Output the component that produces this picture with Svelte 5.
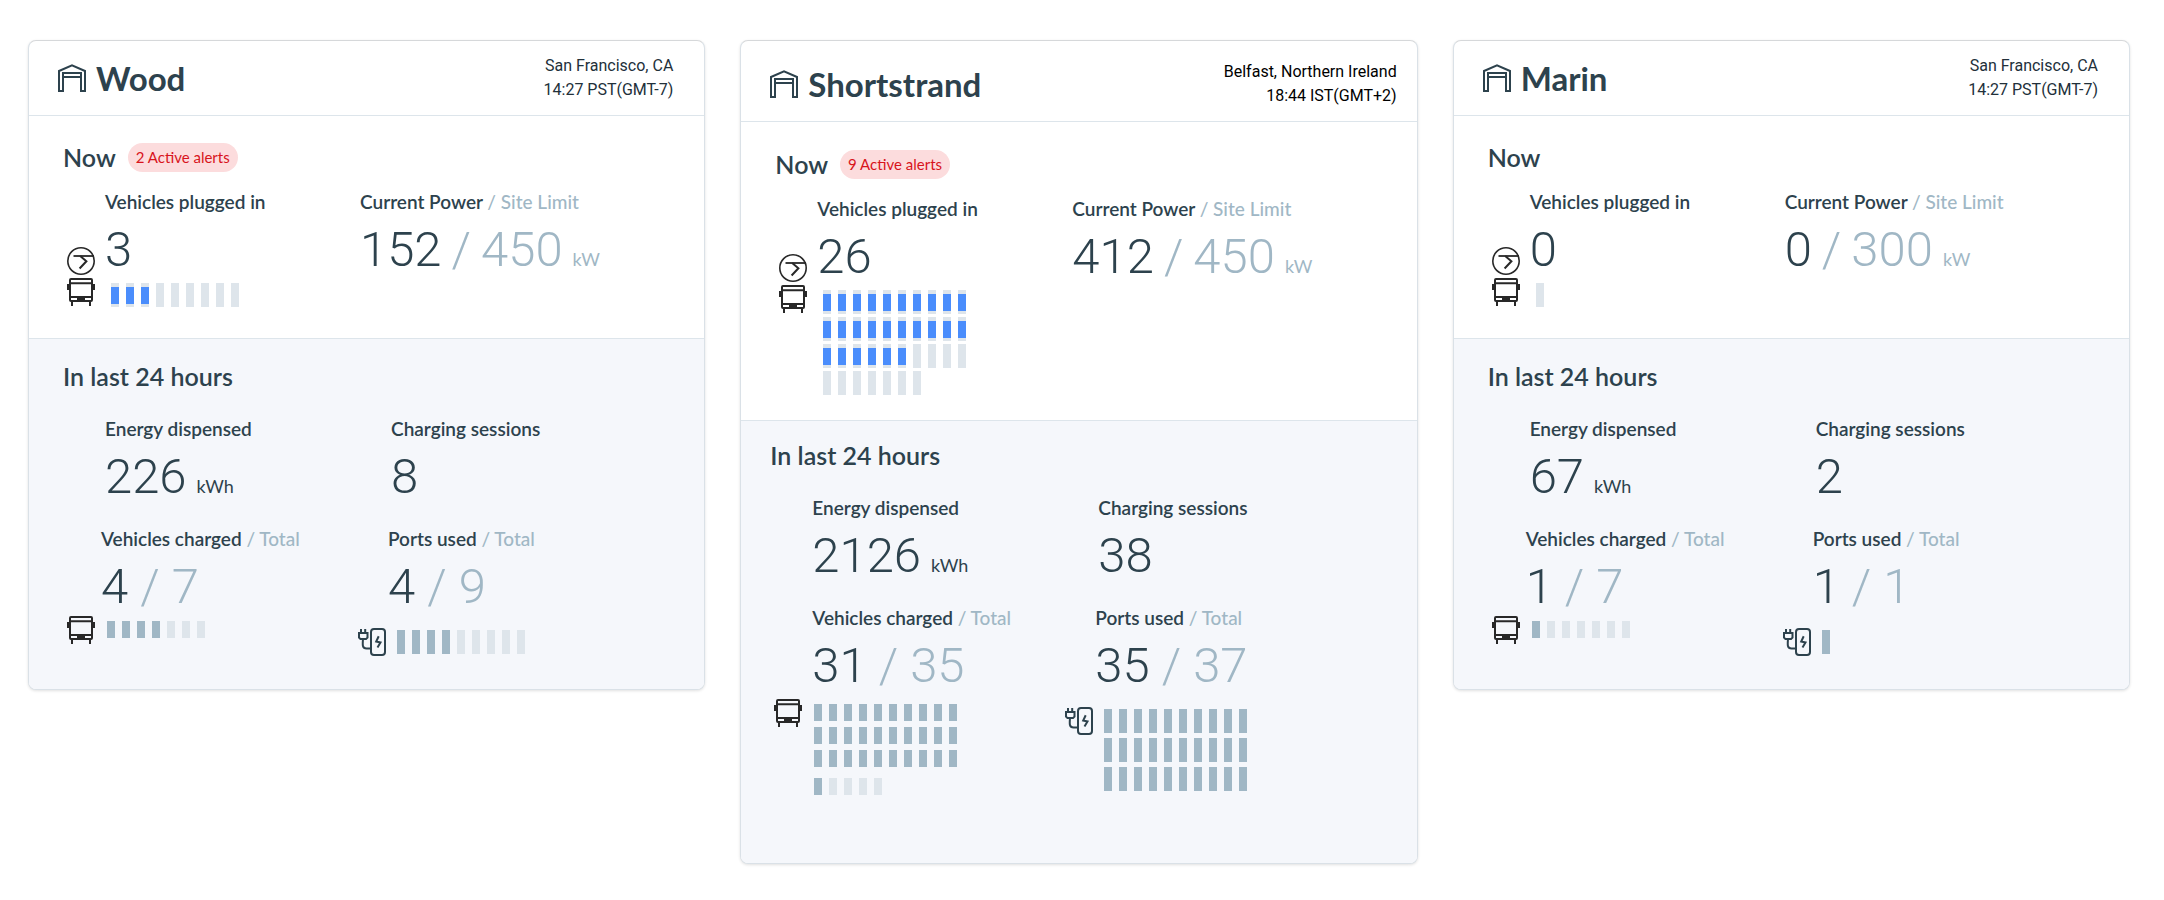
<script>
  const sites = [
    {
      name: 'Wood',
      place: 'San Francisco, CA',
      time: '14:27 PST(GMT-7)',
      alerts: 2,
      plugged: 3,
      slots: 9,
      power: 152,
      limit: 450,
      energy: 226,
      sessions: 8,
      charged: 4,
      vehicles: 7,
      portsUsed: 4,
      ports: 9,
      portBars: 9
    },
    {
      name: 'Shortstrand',
      place: 'Belfast, Northern Ireland',
      time: '18:44 IST(GMT+2)',
      alerts: 9,
      plugged: 26,
      slots: 37,
      power: 412,
      limit: 450,
      energy: 2126,
      sessions: 38,
      charged: 31,
      vehicles: 35,
      portsUsed: 35,
      ports: 37,
      portBars: 30,
      large: true
    },
    {
      name: 'Marin',
      place: 'San Francisco, CA',
      time: '14:27 PST(GMT-7)',
      alerts: 0,
      plugged: 0,
      slots: 1,
      power: 0,
      limit: 300,
      energy: 67,
      sessions: 2,
      charged: 1,
      vehicles: 7,
      portsUsed: 1,
      ports: 1,
      portBars: 1
    }
  ];
</script>

{#snippet bus()}
  <svg class="icon dark" viewBox="0 0 28 28" aria-hidden="true">
    <rect x="3" y="1" width="22" height="22" rx="1" />
    <path d="M3 5.200h22M3 19h22M5 24v4M23 24v4" />
    <path class="solid" d="M0 6h3v6H0zM25 6h3v6h-3zM10 19h8v4h-8z" />
  </svg>
{/snippet}

{#snippet bars(kind, used, total)}
  <div class="bars {kind}">
    {#each Array(total) as _, i}
      <span class="bar" class:used={i < used}></span>
    {/each}
  </div>
{/snippet}

<main>
  {#each sites as s}
    <article class="card" class:large={s.large}>
      <header>
        <h2>
          <svg class="icon" viewBox="0 0 28 28" aria-hidden="true">
            <path d="M1 27V7l13-5.700L27 7v20h-4V9H5v18zM5 13h18" />
          </svg>
          {s.name}
        </h2>
        <p class="where">{s.place}<br />{s.time}</p>
      </header>

      <section class="now">
        <h3>
          Now
          {#if s.alerts}<span class="badge">{s.alerts} Active alerts</span>{/if}
        </h3>
        <div class="grid">
          <div class="plugged">
            <div class="stack">
              <svg class="icon dark" viewBox="0 0 28 28" aria-hidden="true">
                <circle cx="14" cy="14" r="13.200" stroke-width="1.600" />
                <path d="M6.500 9H27" stroke-width="1.800" />
                <path d="M13.200 9l6.200 5.300-6.800 7.200" />
              </svg>
              {@render bus()}
            </div>
            <div>
              <p class="label">Vehicles plugged in</p>
              <p class="value">{s.plugged}</p>
              {@render bars('live', s.plugged, s.slots)}
            </div>
          </div>
          <div class="power">
            <p class="label">Current Power <span class="muted">/ Site Limit</span></p>
            <p class="value tight">
              {s.power}<span class="muted">/</span><span class="muted">{s.limit}</span>
              <small class="muted">kW</small>
            </p>
          </div>
        </div>
      </section>

      <section class="day">
        <h3>In last 24 hours</h3>
        <div class="grid">
          <div class="total energy">
            <p class="label">Energy dispensed</p>
            <p class="value tight">{s.energy}<small>kWh</small></p>
          </div>
          <div class="total">
            <p class="label">Charging sessions</p>
            <p class="value">{s.sessions}</p>
          </div>
          <div class="charged">
            <div class="text">
              <p class="label">Vehicles charged <span class="muted">/ Total</span></p>
              <p class="value">
                {s.charged}<span class="muted">/</span><span class="muted">{s.vehicles}</span>
              </p>
            </div>
            <div class="strip">
              {@render bus()}
              {@render bars('fleet', s.charged, s.vehicles)}
            </div>
          </div>
          <div class="ports">
            <div class="text">
              <p class="label">Ports used <span class="muted">/ Total</span></p>
              <p class="value">
                {s.portsUsed}<span class="muted">/</span><span class="muted">{s.ports}</span>
              </p>
            </div>
            <div class="strip">
              <svg class="icon" viewBox="0 0 28 28" aria-hidden="true">
                <rect x="13" y="1" width="14" height="26" rx="3" />
                <path d="M20.700 8.200l-2.500 5.300 4.300 1-3 5" />
                <path d="M3 1v4M7.200 1v4M1 5h8.500v4.500l-1.500 1.600H2.500L1 9.500zM5 11c-.5 6-.8 9.500 3.500 9.500H13" />
              </svg>
              {@render bars('port', s.portsUsed, s.portBars)}
            </div>
          </div>
        </div>
      </section>
    </article>
  {/each}
</main>

<style>
  :global(body) {
    margin: 0;
    background: #fff;
  }

  main {
    display: grid;
    grid-template-columns: repeat(3, minmax(0, 1fr));
    align-items: start;
    gap: 35px;
    padding: 40px 34px 36px 28px;
    font-family: Lato, 'Liberation Sans', sans-serif;
    color: #2d424d;
  }

  h2,
  h3,
  p {
    margin: 0;
  }

  .card {
    border: 1px solid #dae1e7;
    border-top-color: #d6d8da;
    border-radius: 8px;
    overflow: hidden;
    background: #fff;
    box-shadow: 0 1px 3px rgba(0, 0, 0, 0.12);
  }

  header {
    display: flex;
    align-items: center;
    justify-content: space-between;
    min-height: 74px;
    padding: 0 31px 0 29px;
    border-bottom: 1px solid #dde5eb;
  }

  .large header {
    padding: 6px 20px 0 29px;
  }

  h2 {
    display: flex;
    align-items: center;
    gap: 10px;
    font-size: 33px;
    font-weight: 700;
    line-height: 40px;
  }

  .where {
    font-family: Roboto, 'Liberation Sans', sans-serif;
    font-size: 16px;
    line-height: 24px;
    text-align: right;
    color: #22303a;
  }

  .large .where {
    color: #000;
  }

  .icon {
    display: block;
    flex: none;
    width: 28px;
    height: 28px;
    fill: none;
    stroke: #2d424d;
    stroke-width: 2;
  }

  .dark {
    stroke: #282828;
  }

  .solid {
    fill: #282828;
    stroke: none;
  }

  h3 {
    display: flex;
    align-items: center;
    gap: 12px;
    font-size: 25px;
    font-weight: 600;
    line-height: 30px;
  }

  .badge {
    padding: 0 8px;
    border-radius: 15px;
    background: #fcdcdd;
    color: #d8141c;
    font-size: 15px;
    font-weight: 400;
    line-height: 29px;
  }

  section {
    padding-left: 34px;
  }

  .grid {
    display: grid;
    grid-template-columns: 291px 1fr;
    margin-left: 4px;
  }

  .now {
    box-sizing: border-box;
    min-height: 223px;
    padding-top: 26px;
    padding-bottom: 25px;
    border-bottom: 1px solid #dde5eb;
  }

  .large .now {
    padding-top: 27px;
  }

  .now .grid {
    margin-top: 19px;
  }

  .plugged {
    display: flex;
    gap: 10px;
  }

  .stack {
    display: grid;
    align-content: start;
    gap: 3px;
    padding-top: 56px;
  }

  .power {
    padding-left: 2px;
  }

  .label {
    font-size: 19px;
    font-weight: 600;
    line-height: 22px;
    white-space: nowrap;
  }

  .muted {
    color: #a0b7c5;
  }

  .label .muted {
    font-weight: 500;
  }

  .value {
    display: flex;
    align-items: baseline;
    gap: 12px;
    margin-top: 10px;
    font-family: Roboto, 'Liberation Sans', sans-serif;
    font-size: 49px;
    font-weight: 300;
    line-height: 54px;
  }

  .tight {
    gap: 10px;
  }

  small {
    font-family: Lato, 'Liberation Sans', sans-serif;
    font-size: 18px;
    font-weight: 400;
    line-height: 22px;
  }

  .day {
    padding-top: 22px;
    padding-bottom: 33px;
    background: #f5f7fb;
  }

  .large .day {
    padding-top: 19px;
    padding-bottom: 68px;
    padding-left: 29px;
  }

  .day .grid {
    row-gap: 24px;
    margin-top: 27px;
  }

  .total {
    padding-left: 33px;
  }

  .energy {
    padding-left: 38px;
  }

  .charged .text {
    padding-left: 34px;
  }

  .large .charged .text {
    padding-left: 38px;
  }

  .ports .text {
    padding-left: 30px;
  }

  .strip {
    display: flex;
    align-items: flex-start;
    gap: 12px;
    margin-top: 2px;
  }

  .large .charged .strip {
    margin-top: 6px;
  }

  .ports .strip {
    gap: 11px;
    margin-top: 14px;
  }

  .bars {
    display: grid;
    grid-template-columns: repeat(10, 8px);
    column-gap: 7px;
  }

  .bar {
    height: 24px;
    background: #dee5eb;
  }

  .used {
    background: #a0b7c5;
  }

  .live {
    row-gap: 3px;
    padding: 6px 0 0 6px;
  }

  .live .used {
    box-sizing: border-box;
    border: solid #dee5eb;
    border-width: 4px 0 3px;
    background: #4a8dfc;
  }

  .fleet {
    row-gap: 6px;
    padding-top: 5px;
  }

  .fleet .bar {
    height: 17px;
  }

  .fleet .bar:nth-child(n + 31) {
    margin-top: 5px;
  }

  .port {
    row-gap: 5px;
    padding-top: 2px;
  }
</style>
